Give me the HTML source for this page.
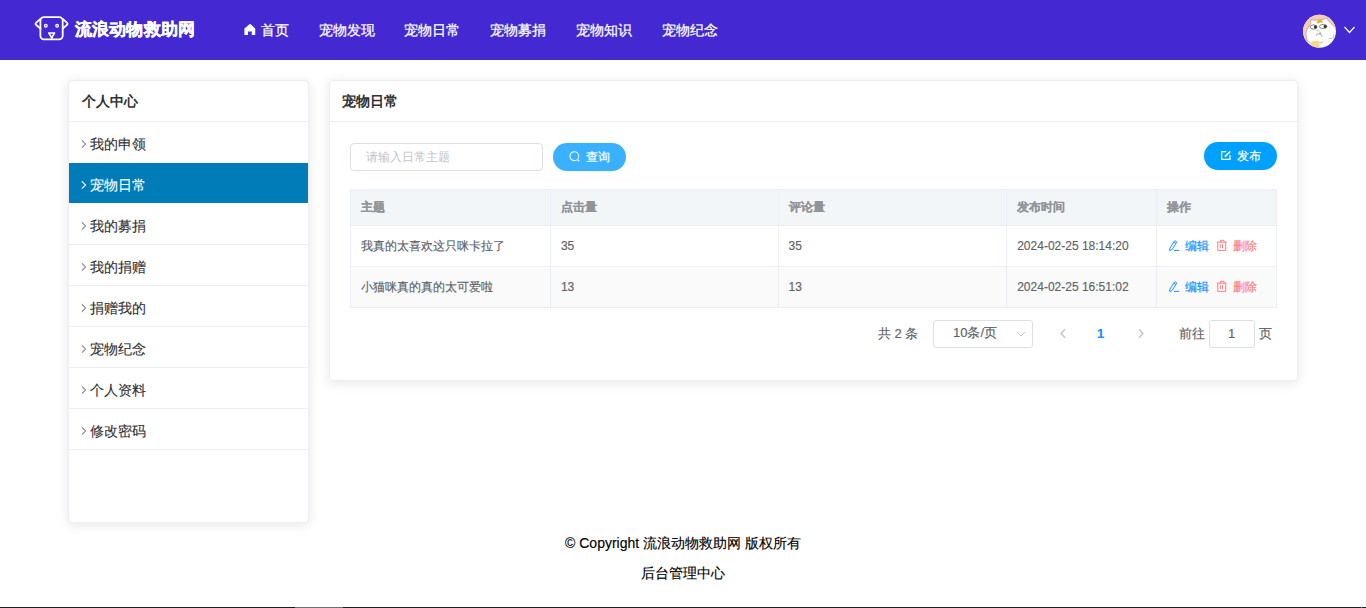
<!DOCTYPE html>
<html><head><meta charset="utf-8">
<style>
*{box-sizing:border-box;margin:0;padding:0}
html,body{width:1366px;height:608px;overflow:hidden;background:#fff;font-family:"Liberation Sans",sans-serif}
.abs{position:absolute}
#hdr{position:absolute;left:0;top:0;width:1366px;height:60px;background:#4429d3}
.logo-t{position:absolute;left:75px;letter-spacing:0.15px;top:18px;font-size:17px;font-weight:bold;-webkit-text-stroke:0.35px #fff;color:#fff;line-height:24px;white-space:nowrap}
.nav{position:absolute;top:21px;font-size:14px;color:#fff;line-height:18px;white-space:nowrap;-webkit-text-stroke:0.25px #fff}
.card{position:absolute;background:#fff;border:1px solid #ebeef5;border-radius:4px;box-shadow:0 2px 12px 0 rgba(0,0,0,.1)}
.ch{height:41px;border-bottom:1px solid #ebeef5;font-size:14px;font-weight:bold;color:#303133;line-height:40px;padding-left:12px}
.mt{font-size:14px;line-height:42px;white-space:nowrap;-webkit-text-stroke:0.1px currentColor}
.ch2{font-size:14px;font-weight:bold;color:#303133;line-height:20px;white-space:nowrap}
.mi{position:relative;height:41px;border-bottom:1px solid #ebeef5;font-size:14px;color:#303133;line-height:42px;padding-left:21px;white-space:nowrap}
.mi.act{background:#007db8;color:#fff;border-bottom:1px solid #007db8}
.mi svg{position:absolute;left:12px;top:18px}
.inp{position:absolute;left:20px;top:62px;width:193px;height:28px;border:1px solid #dcdfe6;border-radius:4px;font-size:12px;color:#c0c4cc;line-height:26px;padding-left:15px;white-space:nowrap}
.btn{position:absolute;height:28px;border-radius:14px;color:#fff;font-size:12px;line-height:28px;white-space:nowrap;-webkit-text-stroke:0.2px #fff}
table{position:absolute;left:20px;top:108px;width:927px;border-collapse:collapse;font-size:12px;color:#606266}
td,th{border:1px solid #ebeef5;text-align:left;padding-left:10px;white-space:nowrap}
th{height:36px;background:#f2f6f9;color:#909399;font-weight:bold;-webkit-text-stroke:0.1px #909399}
td{height:41px;-webkit-text-stroke:0.15px currentColor}
tr.st td{background:#fafafa}
.op{position:relative;display:inline-block}
.op svg{vertical-align:-1px;margin-right:6px}
.op .ic2{margin-left:8px}
.opt{font-size:12px;line-height:16px;white-space:nowrap;-webkit-text-stroke:0.15px currentColor}
.pg{position:absolute;font-size:13px;color:#606266;line-height:16px;white-space:nowrap;-webkit-text-stroke:0.15px currentColor}
.foot{position:absolute;left:0;width:1366px;text-align:center;font-size:14px;color:#000;line-height:18px;white-space:nowrap;-webkit-text-stroke:0.15px #000}
</style></head><body>
<div id="hdr">
  <svg class="abs" style="left:30px;top:12px" width="42" height="32" viewBox="0 0 42 32">
    <g fill="none" stroke="#fff" stroke-width="1.8" stroke-linejoin="round" stroke-linecap="round">
      <rect x="10.4" y="5.2" width="22.3" height="22.2" rx="3.6"/>
      <path d="M10.4 6.8 L6 10.8 Q5 11.8 6 12.8 L10.4 16.6"/>
      <path d="M32.7 6.8 L37.1 10.8 Q38.1 11.8 37.1 12.8 L32.7 16.6"/>
      <circle cx="15.8" cy="13.7" r="1.3" stroke-width="1.3"/>
      <circle cx="27.1" cy="13.7" r="1.3" stroke-width="1.3"/>
      <path d="M18.8 21 H24.6 L21.7 25.6 Z" stroke-width="1.6"/>
      <path d="M21.7 25.6 V27"/>
    </g>
  </svg>
  <div class="logo-t">流浪动物救助网</div>
  <svg class="abs" style="left:244px;top:24px" width="12" height="12" viewBox="0 0 12 12"><path d="M5.8 0.1 Q6.1 -0.1 6.4 0.1 L11.2 4.6 V11 H7.8 V7.4 H4 V11 H0.4 V4.6 Z" fill="#fff"/></svg>
  <div class="nav" style="left:261px">首页</div>
  <div class="nav" style="left:319px">宠物发现</div>
  <div class="nav" style="left:404px">宠物日常</div>
  <div class="nav" style="left:490px">宠物募捐</div>
  <div class="nav" style="left:576px">宠物知识</div>
  <div class="nav" style="left:662px">宠物纪念</div>
  <svg class="abs" style="left:1302px;top:14px" width="35" height="35" viewBox="0 0 35 35">
    <defs><clipPath id="cc"><circle cx="17.5" cy="17.3" r="16.5"/></clipPath></defs>
    <circle cx="17.5" cy="17.3" r="16.5" fill="#fff"/>
    <g clip-path="url(#cc)">
      <path d="M0 0 H35 V16 L32.8 13 L26.4 6.9 L24 3.6 L22.7 5.1 L18 5.8 L13 6.3 L9 5.7 L8.7 9.4 L7.5 11.8 L4.8 16 L3.9 19.7 L5.1 25.8 L6.9 27.6 L0 30 Z" fill="#f9ccb2"/>
      <path d="M9 5.7 L8.7 9.4 L7.5 11.8 L4.8 16 L3.9 19.7 L5.1 25.8 L6.9 27.6 M9 5.7 L13 6.3 L18 5.8 L22.7 5.1 L24 3.6 L26.4 6.9 L32.8 13 L34 16" fill="none" stroke="#8a8a8a" stroke-width="0.55"/>
      <path d="M15.2 9 Q15 6.8 16.8 6.2 Q19.2 5.6 20.4 7.4 Q20.6 8.6 19.6 8.7 L18.6 8 Q17.8 7.6 17.3 8.4 L16.8 9.2 Z" fill="#f4ae12" stroke="#c98a00" stroke-width="0.3"/>
      <ellipse cx="11.6" cy="13" rx="3.5" ry="2.1" fill="#fff" stroke="#333" stroke-width="0.6"/>
      <ellipse cx="13.4" cy="13.1" rx="1.6" ry="1.75" fill="#3c3c3c"/>
      <ellipse cx="21.1" cy="12.5" rx="3.7" ry="2" fill="#fff" stroke="#333" stroke-width="0.6"/>
      <ellipse cx="23.2" cy="12.5" rx="1.6" ry="1.75" fill="#3c3c3c"/>
      <path d="M14.2 16.6 Q15.2 16 16 16.7 M16.3 16.5 Q17 16.1 17.4 16.7" fill="none" stroke="#777" stroke-width="0.5"/>
      <path d="M14 21.3 Q15.8 18.9 18 20 M17.7 17.8 Q18.6 19.8 20.2 22.6" fill="none" stroke="#555" stroke-width="0.6"/>
      <path d="M9.6 27 H17.8 V33.5 H9.6 Z" fill="#fbdf8c"/>
      <path d="M12 27.5 V33 M15 27.5 V33" stroke="#e8c45a" stroke-width="0.6"/>
      <path d="M7 27.8 Q8.8 30 9.8 29.8 M18 29 Q20.5 29 21.5 27.5" fill="none" stroke="#777" stroke-width="0.5"/>
      <path d="M26.5 24.5 Q29 25.5 31.5 23.5 Q32 21.5 31 20.5" fill="none" stroke="#888" stroke-width="0.5"/>
    </g>
  </svg>
  <svg class="abs" style="left:1343px;top:26px" width="13" height="8" viewBox="0 0 13 8"><path d="M1.5 1 L6.5 6.5 L11.5 1" fill="none" stroke="#fff" stroke-width="1.2"/></svg>
</div>

<div class="card" style="left:68px;top:80px;width:241px;height:443px"></div>
<div class="abs" style="left:69px;top:121px;width:239px;height:1px;background:#ebeef5"></div>
<div class="abs ch2" style="left:82px;top:91px">个人中心</div>
<div class="abs" style="left:69px;top:163px;width:239px;height:40px;background:#007db8"></div>
<div class="abs" style="left:69px;top:244px;width:239px;height:1px;background:#ebeef5"></div>
<div class="abs" style="left:69px;top:285px;width:239px;height:1px;background:#ebeef5"></div>
<div class="abs" style="left:69px;top:326px;width:239px;height:1px;background:#ebeef5"></div>
<div class="abs" style="left:69px;top:367px;width:239px;height:1px;background:#ebeef5"></div>
<div class="abs" style="left:69px;top:408px;width:239px;height:1px;background:#ebeef5"></div>
<div class="abs" style="left:69px;top:449px;width:239px;height:1px;background:#ebeef5"></div>
<svg class="abs" style="left:80px;top:139px" width="8" height="10" viewBox="0 0 8 10"><path d="M1.8 1.3 L5.6 5 L1.8 8.7" fill="none" stroke="#404246" stroke-width="0.95"/></svg>
<div class="abs mt" style="left:90px;top:123px;color:#303133">我的申领</div>
<svg class="abs" style="left:80px;top:180px" width="8" height="10" viewBox="0 0 8 10"><path d="M1.8 1.3 L5.6 5 L1.8 8.7" fill="none" stroke="#fff" stroke-width="1.05"/></svg>
<div class="abs mt" style="left:90px;top:164px;color:#fff">宠物日常</div>
<svg class="abs" style="left:80px;top:221px" width="8" height="10" viewBox="0 0 8 10"><path d="M1.8 1.3 L5.6 5 L1.8 8.7" fill="none" stroke="#404246" stroke-width="0.95"/></svg>
<div class="abs mt" style="left:90px;top:205px;color:#303133">我的募捐</div>
<svg class="abs" style="left:80px;top:262px" width="8" height="10" viewBox="0 0 8 10"><path d="M1.8 1.3 L5.6 5 L1.8 8.7" fill="none" stroke="#404246" stroke-width="0.95"/></svg>
<div class="abs mt" style="left:90px;top:246px;color:#303133">我的捐赠</div>
<svg class="abs" style="left:80px;top:303px" width="8" height="10" viewBox="0 0 8 10"><path d="M1.8 1.3 L5.6 5 L1.8 8.7" fill="none" stroke="#404246" stroke-width="0.95"/></svg>
<div class="abs mt" style="left:90px;top:287px;color:#303133">捐赠我的</div>
<svg class="abs" style="left:80px;top:344px" width="8" height="10" viewBox="0 0 8 10"><path d="M1.8 1.3 L5.6 5 L1.8 8.7" fill="none" stroke="#404246" stroke-width="0.95"/></svg>
<div class="abs mt" style="left:90px;top:328px;color:#303133">宠物纪念</div>
<svg class="abs" style="left:80px;top:385px" width="8" height="10" viewBox="0 0 8 10"><path d="M1.8 1.3 L5.6 5 L1.8 8.7" fill="none" stroke="#404246" stroke-width="0.95"/></svg>
<div class="abs mt" style="left:90px;top:369px;color:#303133">个人资料</div>
<svg class="abs" style="left:80px;top:426px" width="8" height="10" viewBox="0 0 8 10"><path d="M1.8 1.3 L5.6 5 L1.8 8.7" fill="none" stroke="#404246" stroke-width="0.95"/></svg>
<div class="abs mt" style="left:90px;top:410px;color:#303133">修改密码</div>

<div class="card" style="left:329px;top:80px;width:969px;height:301px">
  <div class="ch">宠物日常</div>
  <div class="inp">请输入日常主题</div>
  <div class="btn" style="left:223px;top:62px;width:73px;background:#3ab1fe;padding-left:16px">
    <svg class="abs" style="left:16px;top:8px" width="12" height="12" viewBox="0 0 12 12"><circle cx="5.3" cy="5.2" r="4.4" fill="none" stroke="#fff" stroke-width="1.05"/><path d="M8.4 8.4 L10.3 10.3" stroke="#fff" stroke-width="1.1"/></svg>
    <span class="abs" style="left:33px;top:0">查询</span>
  </div>
  <div class="btn" style="left:874px;top:61px;width:73px;background:#00a0ff">
    <svg class="abs" style="left:17px;top:9px" width="10" height="10" viewBox="0 0 10 10"><path d="M5.2 0.7 H0.65 V8.35 H9 V4.1" fill="none" stroke="#fff" stroke-width="1.25"/><path d="M3.9 5.7 L9.3 0.5" stroke="#fff" stroke-width="1.7"/></svg>
    <span class="abs" style="left:33px;top:0">发布</span>
  </div>
  <table>
    <colgroup><col style="width:200px"><col style="width:228px"><col style="width:229px"><col style="width:150px"><col style="width:120px"></colgroup>
    <tr><th>主题</th><th>点击量</th><th>评论量</th><th>发布时间</th><th>操作</th></tr>
    <tr><td>我真的太喜欢这只咪卡拉了</td><td>35</td><td>35</td><td>2024-02-25 18:14:20</td><td></td></tr>
    <tr class="st"><td>小猫咪真的真的太可爱啦</td><td>13</td><td>13</td><td>2024-02-25 16:51:02</td><td></td></tr>
  </table>
  <div class="pg" style="left:548px;top:245px">共 2 条</div>
  <div class="abs" style="left:603px;top:239px;width:100px;height:28px;border:1px solid #dcdfe6;border-radius:3px"></div>
  <div class="pg" style="left:623px;top:244px">10条/页</div>
  <svg class="abs" style="left:686px;top:250px" width="10" height="7" viewBox="0 0 10 7"><path d="M1.2 1.2 L5 5 L8.8 1.2" fill="none" stroke="#c0c4cc" stroke-width="1"/></svg>
  <svg class="abs" style="left:729px;top:247px" width="8" height="11" viewBox="0 0 8 11"><path d="M6 1.2 L2 5.5 L6 9.8" fill="none" stroke="#c0c4cc" stroke-width="1.4"/></svg>
  <svg class="abs" style="left:807px;top:247px" width="8" height="11" viewBox="0 0 8 11"><path d="M2 1.2 L6 5.5 L2 9.8" fill="none" stroke="#c0c4cc" stroke-width="1.4"/></svg>
  <div class="pg" style="left:767px;top:245px;color:#1890ff;font-weight:bold">1</div>
  <div class="pg" style="left:849px;top:245px">前往</div>
  <div class="abs" style="left:879px;top:239px;width:46px;height:28px;border:1px solid #dcdfe6;border-radius:3px"></div>
  <div class="pg" style="left:898px;top:245px">1</div>
  <div class="pg" style="left:929px;top:245px">页</div>
</div>

<svg class="abs" style="left:1164px;top:236px" width="16" height="16" viewBox="0 0 16 16"><path d="M5.6 14.6 L5.9 12.2 L10.5 5.1 Q10.9 4.6 11.5 4.9 L12.4 5.5 Q12.9 5.9 12.6 6.5 L8 13.6 Z M9.9 6.2 L12 7.6" fill="none" stroke="#0a8fff" stroke-width="0.95" stroke-linejoin="round"/><path d="M10 14.4 H15" stroke="#0a8fff" stroke-width="1"/></svg>
<div class="abs opt" style="left:1185px;top:238px;color:#0a8fff">编辑</div>
<svg class="abs" style="left:1212px;top:236px" width="16" height="16" viewBox="0 0 16 16"><path d="M4.8 6.2 H14.6 M8.5 6.2 V4.3 H12 V6.2 M5.8 6.2 V14.4 H13.7 V6.2 M8.3 8.2 V12.2 M10.5 8.2 V12.2" fill="none" stroke="#ff7878" stroke-width="0.95"/></svg>
<div class="abs opt" style="left:1233px;top:238px;color:#ff7878">删除</div>
<svg class="abs" style="left:1164px;top:277px" width="16" height="16" viewBox="0 0 16 16"><path d="M5.6 14.6 L5.9 12.2 L10.5 5.1 Q10.9 4.6 11.5 4.9 L12.4 5.5 Q12.9 5.9 12.6 6.5 L8 13.6 Z M9.9 6.2 L12 7.6" fill="none" stroke="#0a8fff" stroke-width="0.95" stroke-linejoin="round"/><path d="M10 14.4 H15" stroke="#0a8fff" stroke-width="1"/></svg>
<div class="abs opt" style="left:1185px;top:279px;color:#0a8fff">编辑</div>
<svg class="abs" style="left:1212px;top:277px" width="16" height="16" viewBox="0 0 16 16"><path d="M4.8 6.2 H14.6 M8.5 6.2 V4.3 H12 V6.2 M5.8 6.2 V14.4 H13.7 V6.2 M8.3 8.2 V12.2 M10.5 8.2 V12.2" fill="none" stroke="#ff7878" stroke-width="0.95"/></svg>
<div class="abs opt" style="left:1233px;top:279px;color:#ff7878">删除</div>
<div class="foot" style="top:534px">© Copyright 流浪动物救助网 版权所有</div>
<div class="foot" style="top:564px">后台管理中心</div>
<div class="abs" style="left:0;top:607px;width:1366px;height:1px;background:#1b1f25"></div>
<div class="abs" style="left:295px;top:607px;width:48px;height:1px;background:#6b6e72"></div>
<div class="abs" style="left:1361px;top:607px;width:1px;height:1px;background:#8a8d91"></div>
</body></html>
